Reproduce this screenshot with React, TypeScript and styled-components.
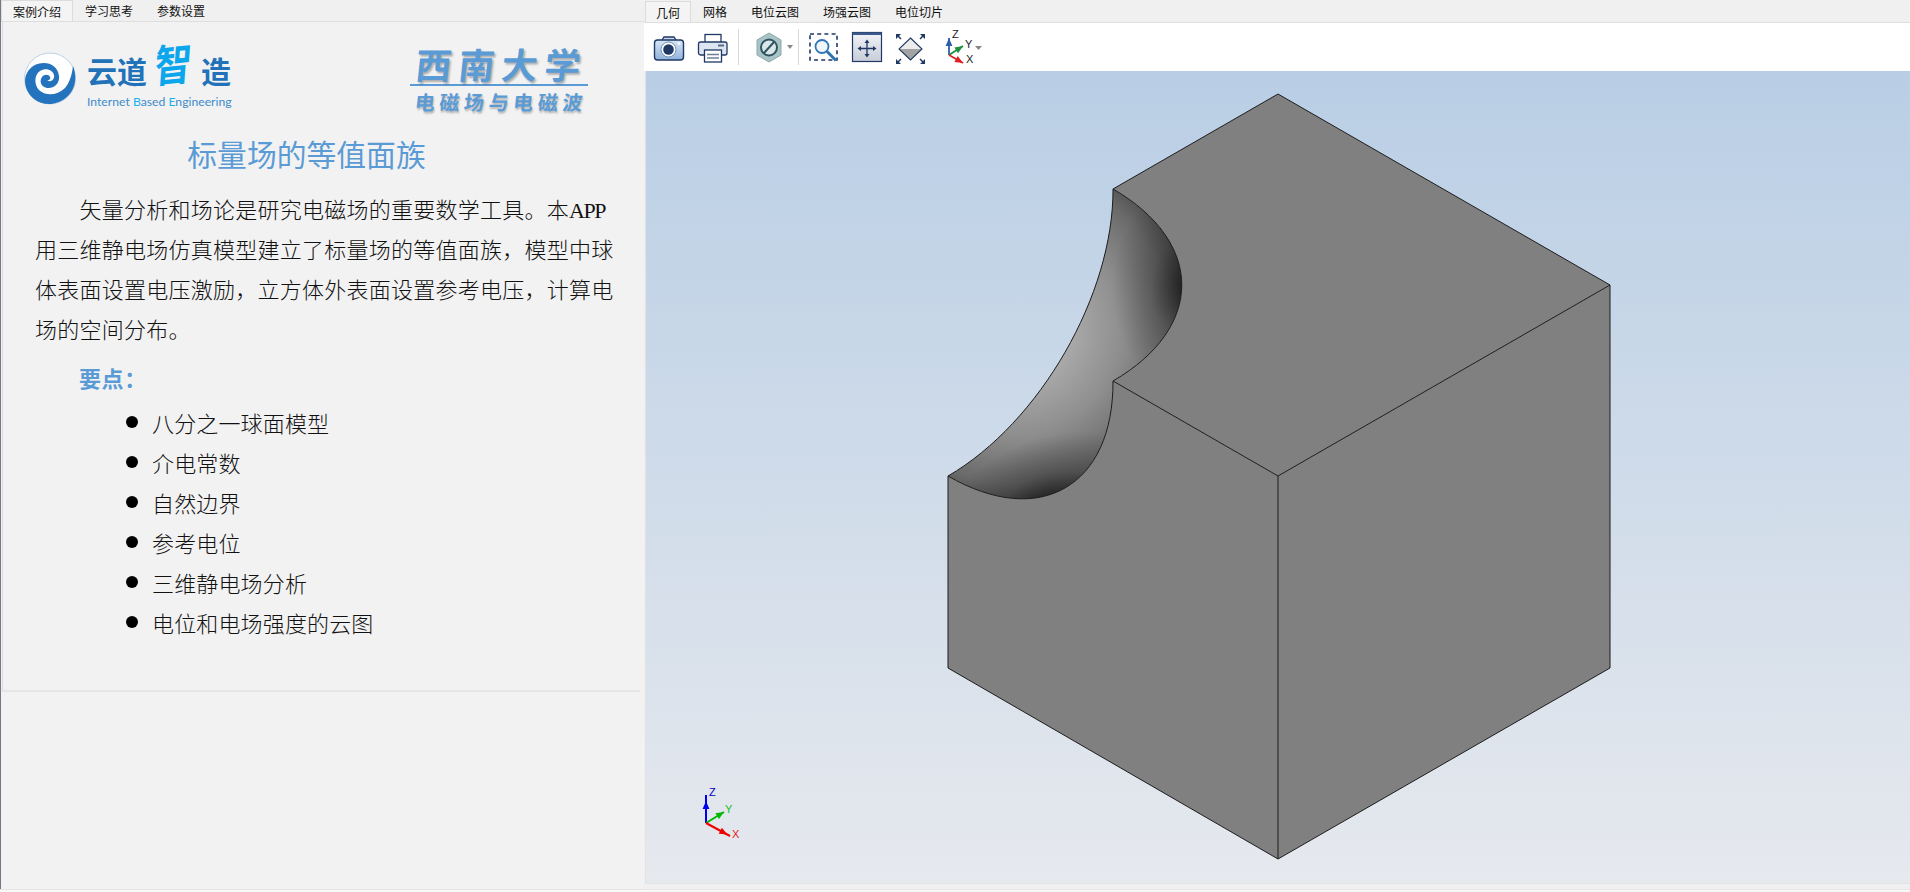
import React from "react";
import styled, { createGlobalStyle } from "styled-components";

const Global = createGlobalStyle`
  html, body { margin: 0; padding: 0; background: #f2f2f2; overflow: hidden; }
  #root { height: 892px; }
`;
const UI = `"Noto Sans CJK SC", "Liberation Sans", sans-serif`;
const BODY = `"Liberation Serif", "Noto Sans CJK SC", serif`;

const Page = styled.div`display:flex;flex-direction:column;width:1910px;height:892px;font-family:${UI};`;
const Main = styled.div`display:flex;flex:1;min-height:0;`;
const FootStrip = styled.div`height:3px;box-sizing:border-box;background:#f8f8f8;border-top:1px solid #e6e6e6;`;

const LeftPanel = styled.section`width:644px;flex:none;background:#f2f2f2;border-left:1px solid #77778a;display:flex;flex-direction:column;box-sizing:border-box;`;
const TabBar = styled.div<{ $pad: number }>`display:flex;height:22px;flex:none;padding-left:${p => p.$pad}px;border-bottom:1px solid #dedede;box-sizing:border-box;background:#f0f0f0;`;
const Tab = styled.div<{ $active?: boolean; $inset?: number }>`
  padding:0 ${p => p.$active ? (p.$inset ?? 11) : 12}px;font-size:12px;line-height:21px;color:#111;white-space:nowrap;box-sizing:border-box;
  ${p => p.$active ? "border:1px solid #dcdcdc;border-bottom:none;background:#f4f4f4;" : ""}
`;
const Pane = styled.div`height:670px;width:638px;margin-left:1px;box-sizing:border-box;border-left:1px solid #dcdcdc;border-bottom:2px solid #e6e6e6;`;
const LogoRow = styled.div`display:flex;gap:178px;padding:21px 0 0 21px;height:91px;box-sizing:border-box;`;
const BrandLogo = styled.div`display:flex;gap:11px;width:208px;`;
const Swirl = styled.svg`width:52px;height:53px;margin-top:9px;flex:none;`;
const BrandText = styled.div`display:flex;flex-direction:column;width:146px;`;
const BrandCn = styled.div`display:flex;align-items:flex-end;height:44px;padding-bottom:2px;box-sizing:border-box;font-size:30px;line-height:30px;font-weight:700;color:#2272b9;white-space:nowrap;`;
const BrandAccent = styled.span`display:inline-block;font-size:37px;font-weight:700;color:#0ca6ec;margin:0 9px 4px 8px;transform:rotate(-6deg) skewX(-10deg) scaleY(1.18);line-height:38px;`;
const BrandEn = styled.div`font-family:Lato,"Liberation Sans",sans-serif;font-size:12.2px;line-height:16px;margin-top:7px;color:#3d8ccb;white-space:nowrap;`;
const Lit = styled.span`color:#1db0f0;`;
const UniLogo = styled.div`width:178px;display:flex;flex-direction:column;align-items:center;`;
const UniName = styled.div`font-size:36px;line-height:40px;font-weight:700;letter-spacing:7px;margin-right:-7px;color:#5b9bd5;text-shadow:2px 2px 2px rgba(0,0,0,.28);transform:skewX(-6deg);white-space:nowrap;`;
const UniRule = styled.div`width:178px;height:2px;background:#5b9bd5;margin-top:1px;`;
const UniSub = styled.div`font-size:20px;line-height:20px;font-weight:700;letter-spacing:4.6px;margin:6px -4.6px 0 0;color:#5b9bd5;text-shadow:1px 2px 2px rgba(0,0,0,.25);transform:skewX(-6deg);white-space:nowrap;`;
const Title = styled.h1`margin:23px 0 0;padding-right:30px;text-align:center;font-family:${BODY};font-weight:400;font-size:29.8px;line-height:40px;color:#5b9bd5;`;
const Intro = styled.p`margin:15px 0 0 32px;width:582px;font-family:${BODY};font-size:22px;letter-spacing:.25px;line-height:40px;text-indent:44.5px;color:#111;font-weight:300;`;
const Narrow = styled.span`letter-spacing:-1.4px;`;
const KeyHead = styled.h2`margin:9px 0 0 76px;font-family:${BODY};font-size:22px;letter-spacing:.6px;font-weight:700;line-height:40px;color:#5b9bd5;`;
const Points = styled.ul`list-style:none;margin:2px 0 0 123px;padding:0;`;
const Point = styled.li`display:flex;align-items:center;gap:14px;height:40px;font-family:${BODY};font-size:22px;letter-spacing:.15px;color:#111;font-weight:300;`;
const Dot = styled.span`width:12px;height:12px;border-radius:50%;background:#000;flex:none;`;

const RightPanel = styled.section`flex:1;min-width:0;display:flex;flex-direction:column;background:#f0f0f0;padding-bottom:6px;box-sizing:border-box;`;
const RightTabs = styled(TabBar)`height:23px;padding-top:1px;`;
const Toolbar = styled.div`height:48px;flex:none;background:#fff;display:flex;align-items:center;padding-left:9px;`;
const Slot = styled.svg<{ $w?: number; $ml?: number }>`width:${p => p.$w ?? 32}px;height:32px;flex:none;overflow:visible;margin-left:${p => p.$ml ?? 0}px;`;
const Sep = styled.div<{ $ml: number }>`width:1px;height:36px;background:#d8d8d8;flex:none;margin-left:${p => p.$ml}px;`;
const Caret = styled.div`width:0;height:0;border-left:3.5px solid transparent;border-right:3.5px solid transparent;border-top:4px solid #888;margin-left:1px;flex:none;`;
const Viewport = styled.div`flex:1;min-height:0;margin-left:2px;box-shadow:-1px 0 0 #e2e2e2,0 1px 0 #e2e2e2;background:linear-gradient(#b9cee5,#e6e9ee);`;
const Scene = styled.svg`display:block;width:100%;height:100%;`;

type P = [number, number];
const quarter = (c: P, a: P, b: P) => {
  const k = 0.5523;
  const p0: P = [c[0] + a[0], c[1] + a[1]];
  const p1: P = [c[0] + b[0], c[1] + b[1]];
  return { p0, p1, seg: `C${p0[0] + k * b[0]} ${p0[1] + k * b[1]} ${p1[0] + k * a[0]} ${p1[1] + k * a[1]} ${p1[0]} ${p1[1]}` };
};
const C0: P = [947, 285];
const H = [166, -96] as P, G = [1, 191] as P, I = [166, 96] as P;
const arcHG = quarter(C0, H, G), arcGI = quarter(C0, G, I), arcIH = quarter(C0, I, H);
const bowl = `M1113 189 ${arcHG.seg} ${arcGI.seg} ${arcIH.seg} Z`;

const Arrow = ({ x1, y1, x2, y2, color, w = 2, back = 0 }: { x1: number; y1: number; x2: number; y2: number; color: string; w?: number; back?: number }) => {
  const a = Math.atan2(y2 - y1, x2 - x1), l = 8, s = 3.4;
  const tx = x2 - Math.cos(a) * back, ty = y2 - Math.sin(a) * back;
  const bx = tx - Math.cos(a) * l, by = ty - Math.sin(a) * l;
  const nx = -Math.sin(a) * s, ny = Math.cos(a) * s;
  return (
    <g>
      <line x1={x1} y1={y1} x2={x2} y2={y2} stroke={color} strokeWidth={w} />
      <polygon points={`${tx},${ty} ${bx + nx},${by + ny} ${bx - nx},${by - ny}`} fill={color} />
    </g>
  );
};

export default function App() {
  return (
    <Page>
      <Global />
      <Main>
        <LeftPanel>
          <TabBar $pad={0}>
            <Tab $active>案例介绍</Tab>
            <Tab>学习思考</Tab>
            <Tab>参数设置</Tab>
          </TabBar>
          <Pane>
            <LogoRow>
              <BrandLogo>
                <Swirl viewBox="0 0 52 53">
                  <circle cx="26" cy="26.5" r="25.5" fill="#fff" stroke="#bcd2e8" />
                  <path d="M49 14 C53 24 52 36 44 44 C35 53 20 55 10 47 C1 40 -1 28 3 21 C6 15 12 11 20 11 C27 11 34 15 35 24 C36 31 30 37 23 36 C17 35 15 29 18 25 C20 22 25 22 26 25 C27 27 25 29 23 28 C26 31 31 28 30 23 C29 18 22 15 16 19 C10 23 10 33 15 38 C21 44 33 44 41 36 C46 30 48 22 49 14 Z" fill="#2473bd" />
                </Swirl>
                <BrandText>
                  <BrandCn>云道<BrandAccent>智</BrandAccent>造</BrandCn>
                  <BrandEn>Internet <Lit>B</Lit>ased <Lit>E</Lit>ngineering</BrandEn>
                </BrandText>
              </BrandLogo>
              <UniLogo>
                <UniName>西南大学</UniName>
                <UniRule />
                <UniSub>电磁场与电磁波</UniSub>
              </UniLogo>
            </LogoRow>
            <Title>标量场的等值面族</Title>
            <Intro>矢量分析和场论是研究电磁场的重要数学工具。本<Narrow>APP</Narrow>用三维静电场仿真模型建立了标量场的等值面族，模型中球体表面设置电压激励，立方体外表面设置参考电压，计算电场的空间分布。</Intro>
            <KeyHead>要点：</KeyHead>
            <Points>
              {["八分之一球面模型", "介电常数", "自然边界", "参考电位", "三维静电场分析", "电位和电场强度的云图"].map(t => (
                <Point key={t}><Dot />{t}</Point>
              ))}
            </Points>
          </Pane>
        </LeftPanel>
        <RightPanel>
          <RightTabs $pad={1}>
            <Tab $active $inset={10}>几何</Tab>
            <Tab>网格</Tab>
            <Tab>电位云图</Tab>
            <Tab>场强云图</Tab>
            <Tab>电位切片</Tab>
          </RightTabs>
          <Toolbar>
            <Slot viewBox="0 0 32 32">
              <defs>
                <linearGradient id="cam" x1="0" y1="0" x2="0" y2="1"><stop offset="0" stopColor="#d9e6f5" /><stop offset="1" stopColor="#8fb2dc" /></linearGradient>
              </defs>
              <path d="M9 9 L11 6 H21 L23 9" fill="#c9d9ec" stroke="#1f3864" strokeWidth="1.3" />
              <rect x="1.5" y="9" width="29" height="20" rx="3" fill="url(#cam)" stroke="#1f3864" strokeWidth="1.4" />
              <circle cx="15.5" cy="18.5" r="7.5" fill="#fff" stroke="#6f8db8" />
              <circle cx="15.5" cy="18.5" r="5.3" fill="#1f3864" />
              <circle cx="26" cy="12.5" r="1.2" fill="#fff" />
            </Slot>
            <Slot $ml={12} viewBox="0 0 32 32">
              <rect x="8" y="3.5" width="16" height="9" fill="#fff" stroke="#1f3864" strokeWidth="1.3" />
              <rect x="1.5" y="11" width="28.5" height="13" rx="2" fill="#dde5f0" stroke="#1f3864" strokeWidth="1.3" />
              <rect x="21" y="13.5" width="6" height="2" fill="#5b6c86" />
              <rect x="7.5" y="19" width="17" height="12" fill="#fff" stroke="#1f3864" strokeWidth="1.3" />
              <path d="M10 23.5 H22 M10 27 H22" stroke="#6f7f99" strokeWidth="1.4" />
            </Slot>
            <Sep $ml={9} />
            <Slot $ml={15} viewBox="0 0 32 32">
              <polygon points="15,2 27,9 27,24 15,31 3,24 3,9" fill="#a8c4c6" stroke="#8aa8aa" />
              <circle cx="15" cy="16.5" r="8" fill="#dbe7e7" stroke="#2f5563" strokeWidth="2" />
              <line x1="10" y1="22" x2="20" y2="11" stroke="#2f5563" strokeWidth="2" />
            </Slot>
            <Caret />
            <Sep $ml={5} />
            <Slot $ml={8} viewBox="0 0 32 32">
              <rect x="3" y="3" width="27" height="26" fill="none" stroke="#1f3864" strokeWidth="1.6" strokeDasharray="4 3.2" />
              <circle cx="15" cy="15.5" r="6.5" fill="#eef5fb" stroke="#2e75b6" strokeWidth="1.8" />
              <line x1="20" y1="20.5" x2="29" y2="29.5" stroke="#2e75b6" strokeWidth="3" />
            </Slot>
            <Slot $ml={12} viewBox="0 0 32 32">
              <defs>
                <linearGradient id="win" x1="0" y1="0" x2="0" y2="1"><stop offset="0" stopColor="#f2f4f8" /><stop offset="1" stopColor="#c7ccd8" /></linearGradient>
              </defs>
              <rect x="1.5" y="1.5" width="29" height="29" fill="url(#win)" stroke="#1f3864" strokeWidth="1.2" />
              <rect x="1.5" y="1.5" width="29" height="2.5" fill="#3c5a8c" />
              <path d="M16 11 V24 M9 17.5 H23" stroke="#1f3864" strokeWidth="1.3" />
              <path d="M16 8.5 L13.5 12 H18.5Z M16 26.5 L13.5 23 H18.5Z M6.5 17.5 L10 15 V20Z M25.5 17.5 L22 15 V20Z" fill="#1f3864" />
            </Slot>
            <Slot $ml={11} viewBox="0 0 32 32">
              <polygon points="16.5,7 28,18 5,18" fill="#ececec" />
              <polygon points="16.5,29 28,18 5,18" fill="#a3a3a3" />
              <polygon points="16.5,7 28,18 16.5,29 5,18" fill="none" stroke="#1f3864" strokeWidth="1.1" />
              <path d="M7 8 L3 4 M26 8 L30 4 M7 28 L3 32 M26 28 L30 32" stroke="#1f3864" strokeWidth="1.5" fill="none" />
              <path d="M2 3 H7 L2 8Z M31 3 H26 L31 8Z M2 33 H7 L2 28Z M31 33 H26 L31 28Z" fill="#1f3864" />
            </Slot>
            <Slot $ml={19} $w={40} viewBox="0 0 40 32" fontFamily="Liberation Sans" fontSize="11" fill="#222">
              <Arrow x1={4} y1={24} x2={4} y2={7} color="#2e5ea8" w={1.8} />
              <Arrow x1={4} y1={24} x2={18} y2={15} color="#1e8f3e" w={1.8} />
              <Arrow x1={4} y1={24} x2={18} y2={32} color="#e02020" w={1.8} />
              <text x="7" y="7">Z</text>
              <text x="20" y="17">Y</text>
              <text x="21" y="32">X</text>
              <polygon points="30,15 37,15 33.5,19" fill="#888" />
            </Slot>
          </Toolbar>
          <Viewport>
            <Scene viewBox="646 71 1264 812" preserveAspectRatio="none">
              <defs>
                <radialGradient id="base" gradientUnits="userSpaceOnUse" cx="1015" cy="328" r="195">
                  <stop offset="0" stopColor="#b2b2b2" />
                  <stop offset=".3" stopColor="#a8a8a8" />
                  <stop offset=".55" stopColor="#8e8e8e" />
                  <stop offset=".8" stopColor="#6a6a6a" />
                  <stop offset="1" stopColor="#3c3c3c" />
                </radialGradient>
                <radialGradient id="darkR" gradientUnits="userSpaceOnUse" cx="0" cy="0" r="1" gradientTransform="translate(1190 288) scale(78 105)">
                  <stop offset="0" stopColor="#000" stopOpacity=".7" />
                  <stop offset=".5" stopColor="#000" stopOpacity=".22" />
                  <stop offset="1" stopColor="#000" stopOpacity="0" />
                </radialGradient>
                <radialGradient id="darkB" gradientUnits="userSpaceOnUse" cx="0" cy="0" r="1" gradientTransform="translate(1050 510) rotate(-20) scale(115 72)">
                  <stop offset="0" stopColor="#000" stopOpacity=".75" />
                  <stop offset=".5" stopColor="#000" stopOpacity=".25" />
                  <stop offset="1" stopColor="#000" stopOpacity="0" />
                </radialGradient>
                <clipPath id="bowlClip"><path d={bowl} /></clipPath>
              </defs>
              <path d={`M1278 94 L1610 285 L1278 476 L1113 381 ${arcIH.seg} Z`} fill="#808080" />
              <path d={`M1113 381 L1278 476 L1278 859 L948 668 L948 476 ${arcGI.seg} Z`} fill="#808080" />
              <polygon points="1278,476 1610,285 1610,668 1278,859" fill="#808080" />
              <path d={bowl} fill="url(#base)" />
              <g clipPath="url(#bowlClip)">
                <rect x="940" y="180" width="260" height="330" fill="url(#darkR)" />
                <rect x="940" y="180" width="260" height="330" fill="url(#darkB)" />
              </g>
              <g fill="none" stroke="#1c1c1c" strokeWidth="1">
                <path d={bowl} />
                <path d="M1113 189 L1278 94 L1610 285 L1610 668 L1278 859 L948 668 L948 476" />
                <path d="M1113 381 L1278 476 L1610 285 M1278 476 L1278 859" />
              </g>
              <g fontFamily="Liberation Sans" fontSize="11">
                <Arrow x1={706} y1={823} x2={706} y2={795} color="#0000f0" back={6} />
                <Arrow x1={706} y1={823} x2={724} y2={812} color="#00b800" />
                <Arrow x1={706} y1={823} x2={730} y2={836} color="#f00000" back={3} />
                <text x="709" y="796" fill="#0000c0">Z</text>
                <text x="725" y="813" fill="#20c020">Y</text>
                <text x="732" y="838" fill="#e02020">X</text>
              </g>
            </Scene>
          </Viewport>
        </RightPanel>
      </Main>
      <FootStrip />
    </Page>
  );
}
